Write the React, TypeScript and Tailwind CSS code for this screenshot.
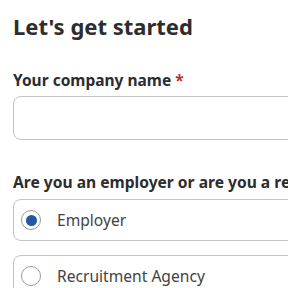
export default function App() {
  return (
    <div className="h-[288px] w-[288px] overflow-hidden bg-white font-['Noto_Sans',sans-serif] text-[#2d2d2d]">
      <div className="w-[420px] pl-[13px] pt-[10px]">
        <h1 className="text-[22px] font-bold leading-[32px]">Let's get started</h1>

        <div className="mt-[26px]">
          <label className="block whitespace-nowrap text-[15.5px] font-bold leading-[24px]">
            Your company name <span className="text-[#c0272d]">*</span>
          </label>
          <input
            type="text"
            className="mt-[4px] block h-[44px] w-full rounded-[8px] border border-[#c4c4c4] bg-white px-3 outline-none"
          />
        </div>

        <div className="mt-[30px]" role="radiogroup">
          <div className="whitespace-nowrap text-[15.6px] font-bold leading-[24px]">
            Are you an employer or are you a recruitment agency? <span className="text-[#c0272d]">*</span>
          </div>
          <div className="mt-[5px] flex flex-col gap-[14px]">
            <label className="flex h-[42px] items-center gap-[16px] rounded-[8px] border border-[#c4c4c4] pl-[7px]">
              <span className="flex h-[20px] w-[20px] items-center justify-center rounded-full border border-[#9a9a9a]">
                <span className="h-[11px] w-[11px] rounded-full bg-[#2557a7]" />
              </span>
              <span className="text-[15.6px] leading-[24px] text-[#424242]">Employer</span>
            </label>
            <label className="flex h-[42px] items-center gap-[16px] rounded-[8px] border border-[#c4c4c4] pl-[7px]">
              <span className="h-[20px] w-[20px] rounded-full border border-[#9a9a9a]" />
              <span className="text-[15.6px] leading-[24px] text-[#424242]">Recruitment Agency</span>
            </label>
          </div>
        </div>
      </div>
    </div>
  );
}
